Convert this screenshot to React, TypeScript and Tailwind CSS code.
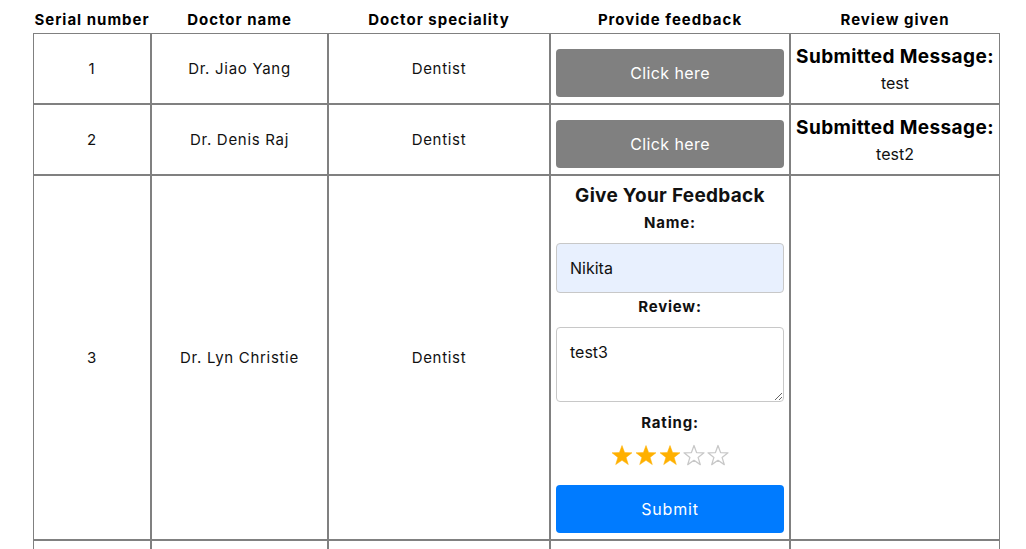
import { useState } from "react"

type Doctor = {
  id: number
  name: string
  speciality: string
  review?: string
}

const doctors: Doctor[] = [
  { id: 1, name: "Dr. Jiao Yang", speciality: "Dentist", review: "test" },
  { id: 2, name: "Dr. Denis Raj", speciality: "Dentist", review: "test2" },
  { id: 3, name: "Dr. Lyn Christie", speciality: "Dentist" },
]

const cell =
  "border border-[#808080] flex items-center justify-center text-center pt-[2px] text-[15px] tracking-[0.7px]"

function Star({ filled }: { filled: boolean }) {
  return (
    <svg width="24" height="22" viewBox="0 0 24 22">
      <polygon
        points="12,1.5 14.6,8.6 22,8.8 16.1,13.4 18.3,20.6 12,16.3 5.7,20.6 7.9,13.4 2,8.8 9.4,8.6"
        fill={filled ? "#ffb000" : "none"}
        stroke={filled ? "#ffb000" : "#c8c8c8"}
        strokeWidth={filled ? 0.5 : 1.3}
        strokeLinejoin="round"
      />
    </svg>
  )
}

function FeedbackForm() {
  const [name, setName] = useState("Nikita")
  const [review, setReview] = useState("test3")
  const [rating, setRating] = useState(3)

  return (
    <div className="w-full h-full flex flex-col items-center px-[5px] pt-[7px]">
      <h2 className="text-[19px] leading-[26px] font-bold tracking-[0.3px]">Give Your Feedback</h2>
      <label className="mt-[4px] text-[15px] leading-[20px] font-bold tracking-[0.8px]">Name:</label>
      <input
        value={name}
        onChange={(e) => setName(e.target.value)}
        className="mt-[10px] w-full h-[50px] rounded-[4px] border border-[#c8c8c8] bg-[#e8f0fe] pl-[13px] text-[16px] text-[#111] outline-none"
      />
      <label className="mt-[4px] text-[15px] leading-[20px] font-bold tracking-[0.8px]">Review:</label>
      <textarea
        value={review}
        onChange={(e) => setReview(e.target.value)}
        className="mt-[10px] w-full h-[75px] rounded-[4px] border border-[#c8c8c8] bg-white pl-[13px] pt-[13px] text-[16px] leading-[22px] text-[#111] outline-none"
      />
      <label className="mt-[11px] text-[15px] leading-[20px] font-bold tracking-[0.8px]">Rating:</label>
      <div className="mt-[7px] h-[30px] flex items-center">
        {[1, 2, 3, 4, 5].map((n) => (
          <button key={n} onClick={() => setRating(n)} className="w-[24px] flex justify-center">
            <Star filled={n <= rating} />
          </button>
        ))}
      </div>
      <button className="mt-[15px] w-full h-[48px] rounded-[4px] bg-[#007bff] text-white text-[16px] tracking-[0.8px]">
        Submit
      </button>
    </div>
  )
}

export default function App() {
  return (
    <div className="min-h-screen bg-white text-[#111] font-['Inter',sans-serif] pl-[33px]">
      <div className="w-[967px] grid grid-cols-[118px_177px_222px_240px_210px]">
        {/* header */}
        {["Serial number", "Doctor name", "Doctor speciality", "Provide feedback", "Review given"].map((h) => (
          <div key={h} className="h-[33px] pt-[9px] text-center text-[15px] leading-[22px] font-bold tracking-[1px] text-black whitespace-nowrap">
            {h}
          </div>
        ))}

        {doctors.map((d) => {
          const rowH = d.id === 3 ? "h-[365px]" : "h-[71px]"
          return (
            <div key={d.id} className="contents">
              <div className={`${cell} ${rowH}`}>{d.id}</div>
              <div className={`${cell} ${rowH}`}>{d.name}</div>
              <div className={`${cell} ${rowH}`}>{d.speciality}</div>
              {d.id === 3 ? (
                <div className={`border border-[#808080] ${rowH}`}>
                  <FeedbackForm />
                </div>
              ) : (
                <div className={`border border-[#808080] ${rowH} px-[5px] pt-[15px]`}>
                  <button className="w-full h-[48px] rounded-[4px] bg-[#808080] text-white text-[16px] tracking-[0.4px]">
                    Click here
                  </button>
                </div>
              )}
              <div className={`border border-[#808080] ${rowH} text-center pt-[11px]`}>
                {d.review && (
                  <>
                    <div className="text-[19px] leading-[24px] font-bold tracking-[0.4px] text-black whitespace-nowrap">
                      Submitted Message:
                    </div>
                    <div className="text-[16px] leading-[24px] mt-[2px]">{d.review}</div>
                  </>
                )}
              </div>
            </div>
          )
        })}

        {/* next row, cut off by the window */}
        {[0, 1, 2, 3, 4].map((i) => (
          <div key={i} className="border border-[#808080] h-[71px]" />
        ))}
      </div>
    </div>
  )
}
